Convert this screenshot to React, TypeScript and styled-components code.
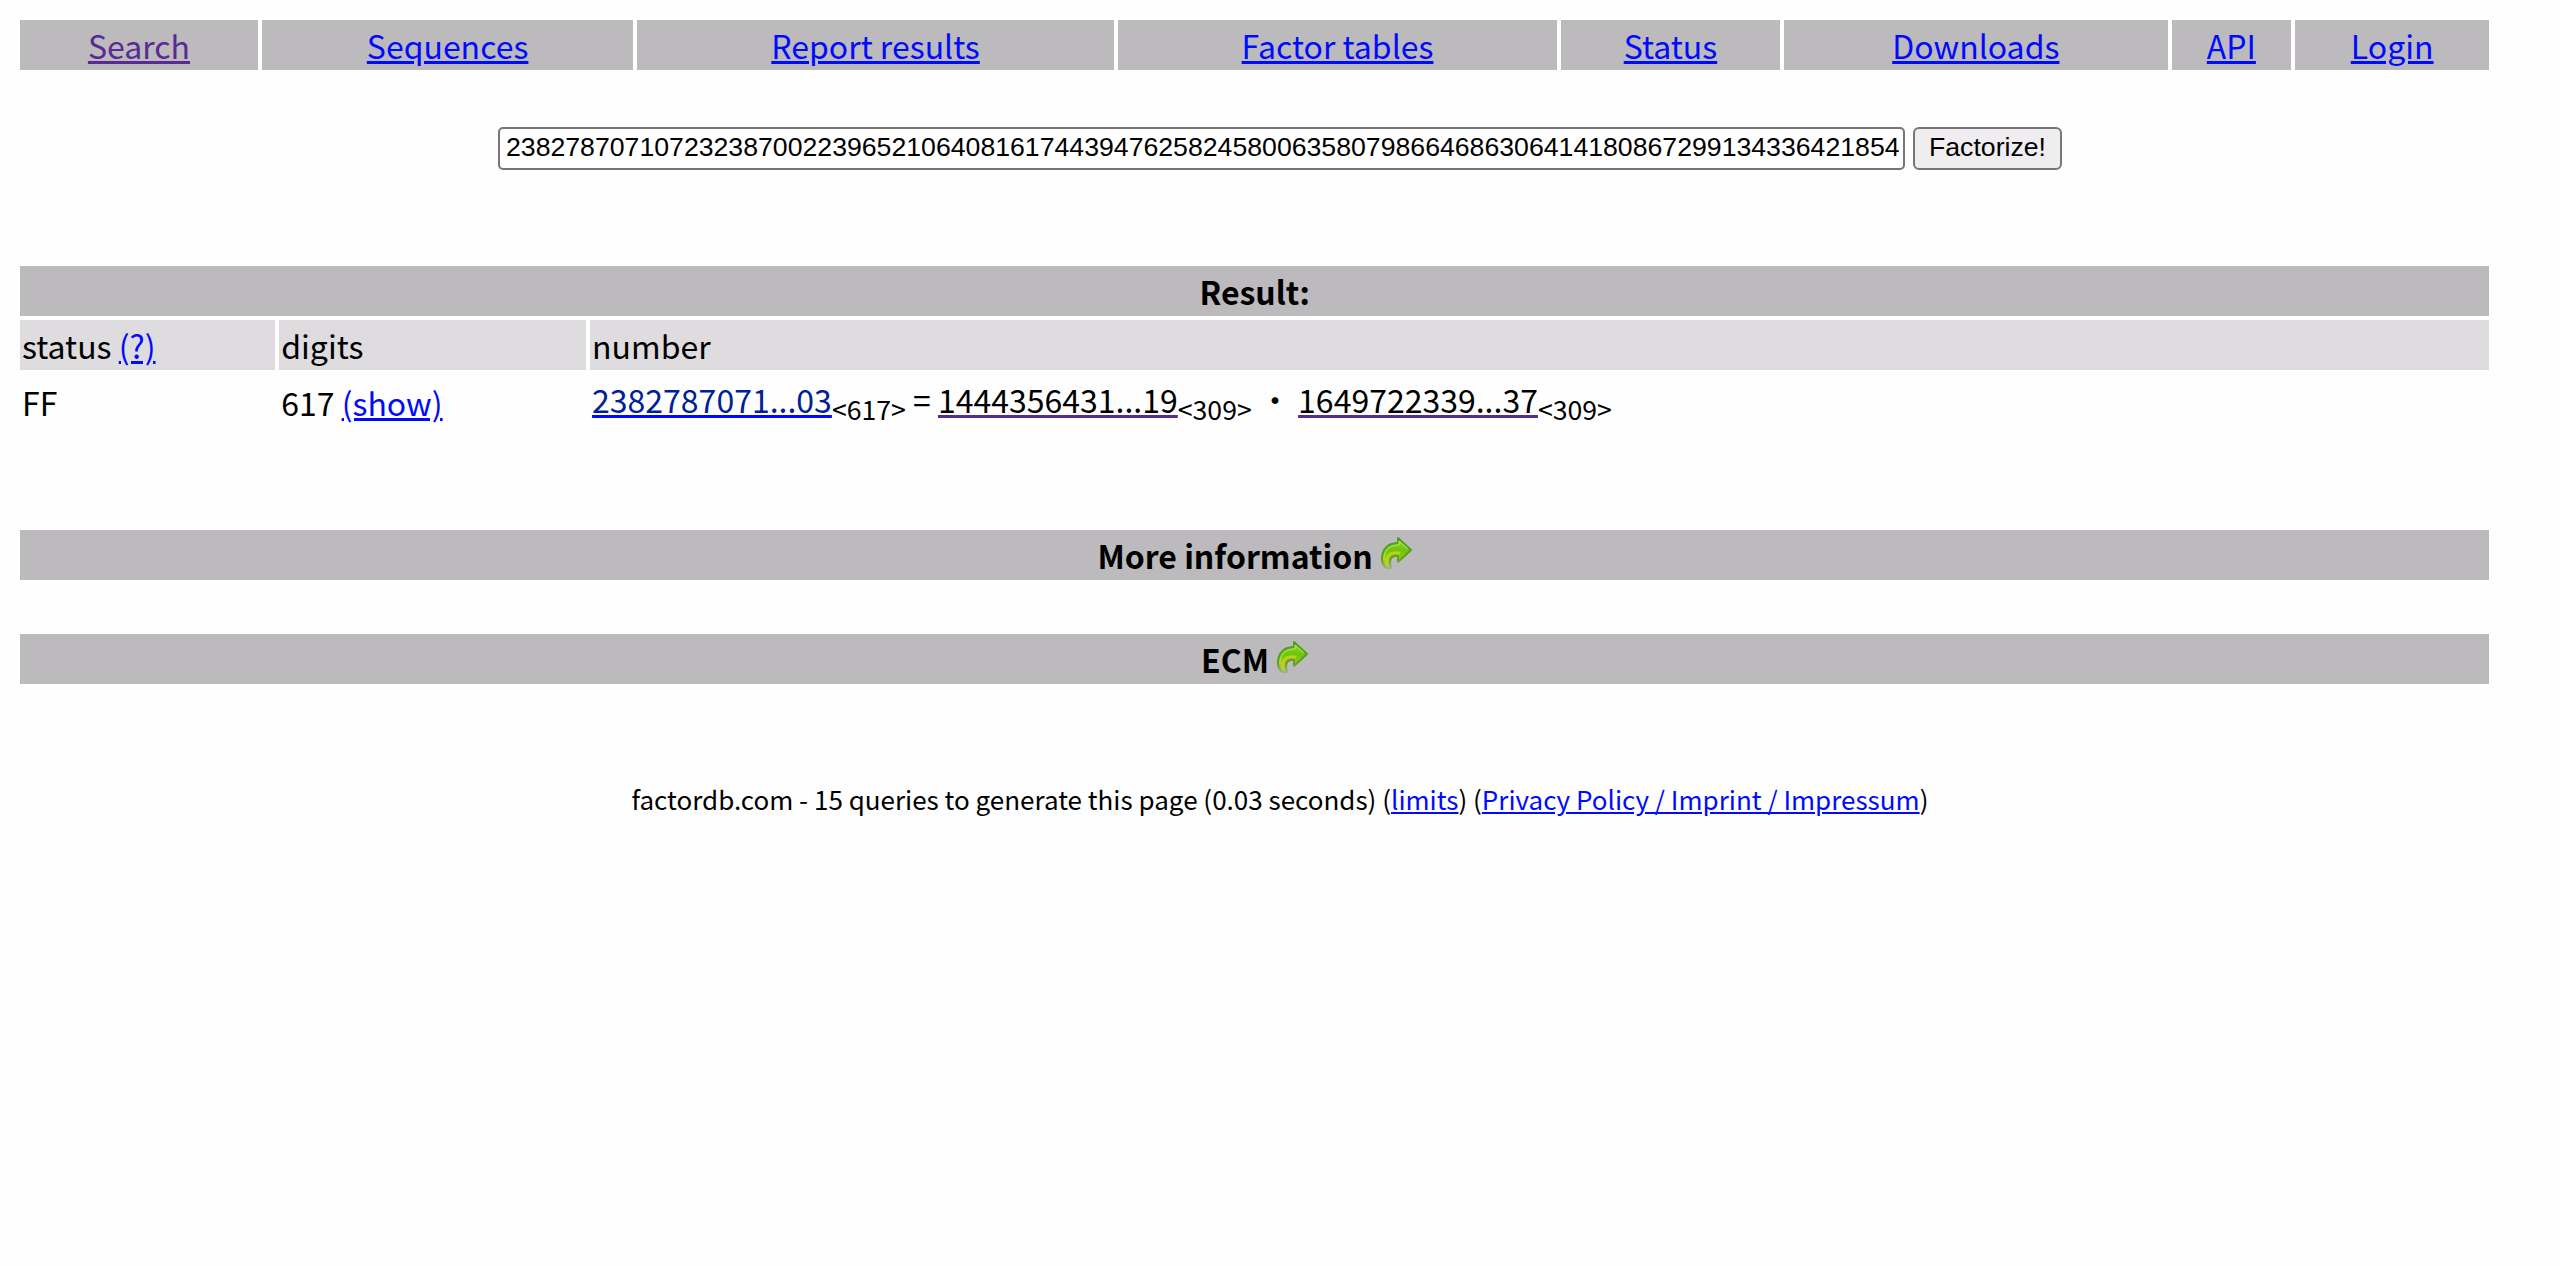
import React from "react";
import styled, { createGlobalStyle } from "styled-components";

const GlobalStyle = createGlobalStyle`
  body {
    margin: 16px;
    background: #fefefe;
    color: #000;
    font: 32px/46px "Noto Sans CJK SC", "Noto Sans", sans-serif;
  }
`;

const Link = styled.a<{ $visited?: boolean }>`
  color: ${(p) => (p.$visited ? "#582a93" : "#000aff")};
  text-decoration: underline;
`;

const LinkText = styled.span<{ $color: string }>`
  color: ${(p) => p.$color};
`;

const Menu = styled.ul`
  display: table;
  width: 98%;
  margin: 0;
  padding: 0;
  border-spacing: 4px;
  box-sizing: border-box;
  list-style: none;
`;

const MenuItem = styled.li`
  display: table-cell;
  padding: 2px;
  background: #bcbabc;
  text-align: center;
`;

const SearchForm = styled.form`
  display: flex;
  justify-content: center;
  gap: 8px;
  margin: 53px 0 92px;
`;

const NumberField = styled.input`
  flex: 0 1 1407px;
  min-width: 0;
  height: 43px;
  box-sizing: border-box;
  padding: 2px 4px 4px 6px;
  border: 2px solid #767676;
  border-radius: 5px;
  background: #fff;
  color: #000;
  font-family: "Liberation Sans", Arial, sans-serif;
  font-size: smaller;
`;

const SubmitButton = styled.button`
  height: 43px;
  box-sizing: border-box;
  padding: 2px 14px 4px;
  border: 2px solid #767676;
  border-radius: 6px;
  background: #efedf0;
  color: #000;
  font-family: "Liberation Sans", Arial, sans-serif;
  font-size: smaller;
`;

const ResultTable = styled.table`
  width: 98%;
  border-spacing: 4px;
`;

const TitleCell = styled.th`
  padding: 2px;
  background: #bcbabc;
  font-weight: bold;
  text-align: center;
`;

const HeadCell = styled.th`
  padding: 2px;
  background: #dedcde;
  font-weight: normal;
  text-align: left;
`;

const Cell = styled.td`
  padding: 2px;
  vertical-align: middle;
  line-height: normal;
`;

const Section = styled.section<{ $gap: number }>`
  width: 98%;
  box-sizing: border-box;
  margin-top: ${(p) => p.$gap}px;
  padding: 4px;
`;

const SectionTitle = styled.h2`
  margin: 0;
  padding: 2px;
  background: #bcbabc;
  font-size: 32px;
  font-weight: bold;
  text-align: center;
`;

const ExpandButton = styled.button`
  padding: 0;
  border: 0;
  background: none;
  font: inherit;
  cursor: pointer;
`;

const Arrow = styled.svg`
  width: 32px;
  height: 32px;
  display: inline-block;
  vertical-align: baseline;
`;

const Footer = styled.footer`
  margin-top: 92px;
  font-size: 26px;
  line-height: 38px;
  text-align: center;
`;

const MENU = [
  "Search",
  "Sequences",
  "Report results",
  "Factor tables",
  "Status",
  "Downloads",
  "API",
  "Login",
];

const NUMBER =
  "2382787071072323870022396521064081617443947625824580063580798664686306414180867299134336421854";

function ExpandArrow({ id }: { id: string }) {
  return (
    <Arrow viewBox="0 0 32 32" aria-hidden="true">
      <defs>
        <linearGradient id={`${id}-body`} x1="0" y1="0" x2="0" y2="1">
          <stop offset="0" stopColor="#8fd43a" />
          <stop offset="0.4" stopColor="#6cc60c" />
          <stop offset="0.7" stopColor="#93c91a" />
          <stop offset="1" stopColor="#b9c08a" />
        </linearGradient>
        <linearGradient id={`${id}-edge`} x1="0" y1="0" x2="0" y2="1">
          <stop offset="0" stopColor="#4f9c1c" />
          <stop offset="0.7" stopColor="#5fa024" />
          <stop offset="1" stopColor="#9db384" />
        </linearGradient>
      </defs>
      <path
        d="M18 1 L31 13 L18 25 V19 C12 18 8 22 11 31 C9 32 6 31 5 30 C1 26 1 19 4 13 C7 8 11 6 18 6 Z"
        fill={`url(#${id}-body)`}
        stroke={`url(#${id}-edge)`}
        strokeWidth="2"
        strokeLinejoin="round"
      />
      <path
        d="M4 23 C4 13 9 8 19 8 V4 L28 12"
        fill="none"
        stroke="#b4ea5c"
        strokeWidth="1"
      />
      <path
        d="M7 27 C5 19 10 15 19 16"
        fill="none"
        stroke="#cfcf1e"
        strokeWidth="3"
        strokeLinecap="round"
        opacity="0.8"
      />
    </Arrow>
  );
}

function ExpandableSection({ title, id, gap }: { title: string; id: string; gap: number }) {
  return (
    <Section $gap={gap}>
      <SectionTitle>
        {title}{" "}
        <ExpandButton type="button" aria-label={`Show ${title}`}>
          <ExpandArrow id={id} />
        </ExpandButton>
      </SectionTitle>
    </Section>
  );
}

export default function App() {
  return (
    <>
      <GlobalStyle />
      <nav>
        <Menu>
          {MENU.map((label, i) => (
            <MenuItem key={label}>
              <Link href="#" $visited={i === 0}>
                {label}
              </Link>
            </MenuItem>
          ))}
        </Menu>
      </nav>
      <main>
        <SearchForm onSubmit={(e) => e.preventDefault()}>
          <NumberField type="text" aria-label="Number" defaultValue={NUMBER} />
          <SubmitButton type="submit">Factorize!</SubmitButton>
        </SearchForm>
        <ResultTable>
          <thead>
            <tr>
              <TitleCell colSpan={3}>Result:</TitleCell>
            </tr>
            <tr>
              <HeadCell>
                status <Link href="#">(?)</Link>
              </HeadCell>
              <HeadCell>digits</HeadCell>
              <HeadCell>number</HeadCell>
            </tr>
          </thead>
          <tbody>
            <tr>
              <Cell>FF</Cell>
              <Cell>
                617 <Link href="#">(show)</Link>
              </Cell>
              <Cell>
                <Link href="#">
                  <LinkText $color="#002099">2382787071...03</LinkText>
                </Link>
                <sub>&lt;617&gt;</sub> ={" "}
                <Link href="#" $visited>
                  <LinkText $color="#000000">1444356431...19</LinkText>
                </Link>
                <sub>&lt;309&gt;</sub> ·{" "}
                <Link href="#" $visited>
                  <LinkText $color="#000000">1649722339...37</LinkText>
                </Link>
                <sub>&lt;309&gt;</sub>
              </Cell>
            </tr>
          </tbody>
        </ResultTable>
        <ExpandableSection title="More information" id="arrow-more" gap={92} />
        <ExpandableSection title="ECM" id="arrow-ecm" gap={46} />
      </main>
      <Footer>
        factordb.com - 15 queries to generate this page (0.03 seconds) (
        <Link href="#">limits</Link>) (
        <Link href="#">Privacy Policy / Imprint / Impressum</Link>)
      </Footer>
    </>
  );
}
